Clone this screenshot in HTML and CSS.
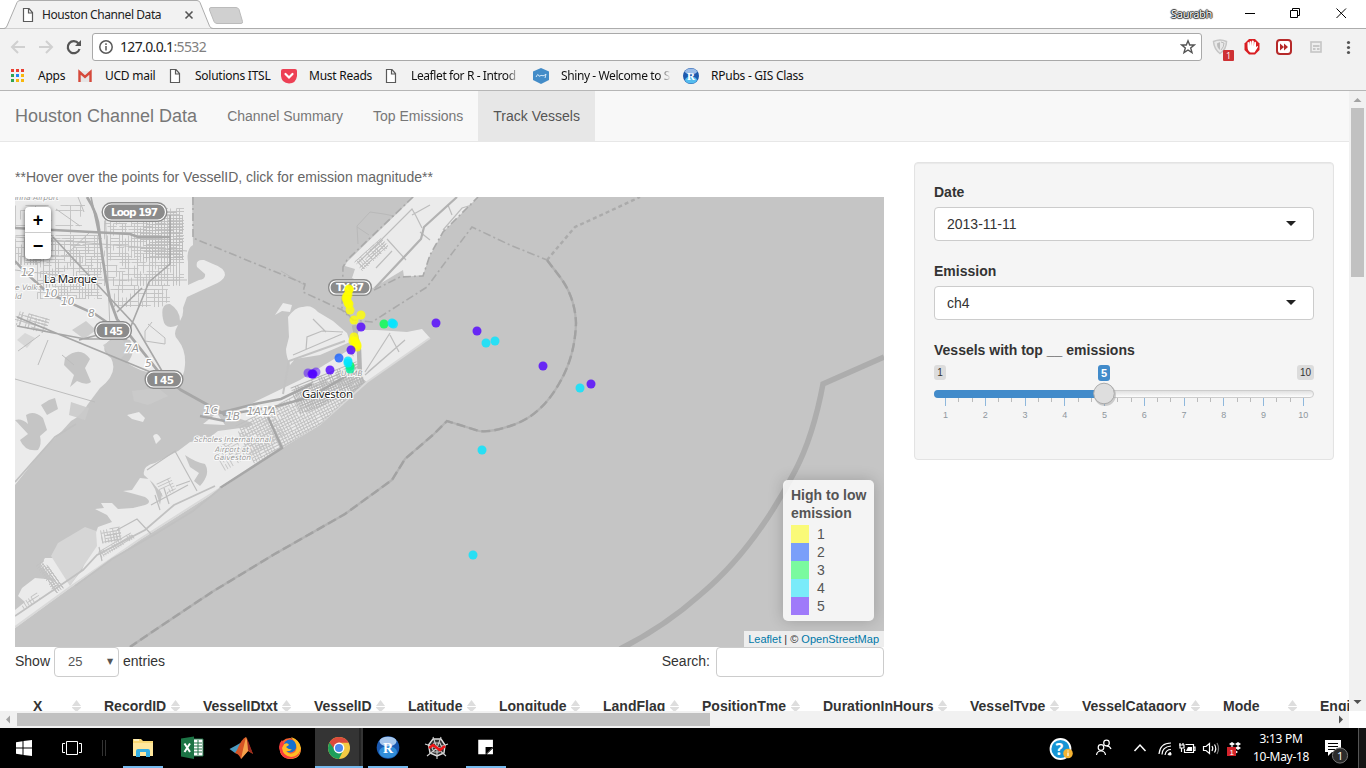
FILE: index.html
```html
<!DOCTYPE html>
<html lang="en">
<head>
<meta charset="utf-8">
<title>Houston Channel Data</title>
<link rel="stylesheet" href="styles.css">
</head>
<body>
<div class="window">
  <header class="tabstrip">
    <svg class="tab-shape" width="250" height="29" viewBox="0 0 250 29">
      <path d="M0 28.5H4Q6 28.5 7 26L17 2.500Q18 .5 20 .5H197Q199 .5 200 2.500L209.500 26Q210.500 28.500 213 28.500H250" fill="#f2f2f2" stroke="#acacac"/>
      <path d="M211 7.500H236Q238 7.500 239 9.500L242.500 21.500Q243 23.500 241 23.500H217Q215 23.500 214 21.500L209.500 10Q209 7.500 211 7.500Z" fill="#d0d0d0" stroke="#bbb"/>
      <path d="M23.500 8.500H29L32.500 12.500V21.500H23.500ZM28.500 8.500V13H32.500" fill="#fff" stroke="#5a5a5a" stroke-width="1.200"/>
      <path d="M185.500 11.500L192.500 18.500M192.500 11.500L185.500 18.500" stroke="#555" stroke-width="1.600"/>
    </svg>
    <span class="tab-title">Houston Channel Data</span>
    <span class="user">Saurabh</span>
    <svg class="winbtns" width="130" height="28" viewBox="1236 0 130 28" fill="none" stroke="#000">
      <path d="M1245 13.500H1255M1290.500 10.500H1297.500V17.500H1290.500ZM1292.500 10.500V8.500H1299.500V15.500H1297.500M1336.500 8.500L1346 18M1346 8.500L1336.500 18"/>
    </svg>
  </header>
  <div class="toolbar">
    <svg width="92" height="32" viewBox="0 29 92 32" fill="none">
      <path d="M25 47H12M18 41L12 47L18 53M39 47H52M46 41L52 47L46 53" stroke="#d0d0d0" stroke-width="2"/>
      <path d="M78.500 43.500A6 6 0 1 0 79.500 49" stroke="#555" stroke-width="2.200"/><path d="M81 40V46H75Z" fill="#555"/>
    </svg>
    <div class="omnibox">
      <svg width="16" height="16" viewBox="0 0 16 16" fill="none" stroke="#5a5a5a" stroke-width="1.500"><circle cx="8" cy="8" r="6.200"/><path d="M8 7V11.500M8 4.300V6"/></svg>
      <span class="url">127.0.0.1<i>:5532</i></span>
      <svg class="star" width="16" height="16" viewBox="0 0 16 16"><path d="M8 1.800L9.700 6H14.200L10.700 8.900L12 13.600L8 11L4 13.600L5.300 8.900L1.800 6H6.300Z" fill="none" stroke="#555" stroke-width="1.400"/></svg>
    </div>
    <svg width="164" height="32" viewBox="1202 29 164 32">
      <path d="M1213.500 41.500Q1220 38.500 1226.500 41.500Q1226.500 49 1220 53.500Q1214 49 1213.500 41.500Z" fill="#e8e8e8" stroke="#c5c5c5" stroke-width="1.500"/><path d="M1217 43.500Q1220 42 1220 42V50Q1217 48 1217 43.500Z" fill="#bbb"/><path d="M1221 42Q1224 43 1224 43Q1224 47 1221 50" fill="none" stroke="#bbb"/>
      <rect x="1223" y="50" width="11" height="11" rx="1" fill="#ce3134"/><text x="1226" y="59" font-size="9" fill="#fff" font-family="Open Sans,sans-serif">1</text>
      <path d="M1249 39H1255L1259.500 43.500V50L1255 54.500H1249L1244.500 50V43.500Z" fill="#d91e22"/><path d="M1247.500 46.500V42.500Q1248.500 41.500 1249.300 42.500V46L1249.700 41.500Q1250.500 40.500 1251.400 41.500V46L1252 40.800Q1253 40 1253.800 41V46.500L1254.400 42Q1255.500 41.500 1256 42.500V47L1257.500 46Q1258 46 1258 47L1254.500 52.500H1250.500Q1247.500 51 1247.500 46.500Z" fill="#fff"/>
      <rect x="1277" y="40" width="14" height="14" rx="3" fill="#fff" stroke="#b62a2a" stroke-width="2"/><path d="M1280 43.500L1284 47L1280 50.500ZM1284 43.500L1288 47L1284 50.500Z" fill="#b62a2a"/>
      <rect x="1311" y="42" width="10" height="10" fill="#eee" stroke="#c5c5c5" stroke-width="1.600"/><path d="M1313 46H1319.500M1313 49H1315.500M1317 49H1319.500" stroke="#bbb" stroke-width="1.600"/>
      <g fill="#555"><circle cx="1348.500" cy="42.500" r="1.600"/><circle cx="1348.500" cy="47.500" r="1.600"/><circle cx="1348.500" cy="52.500" r="1.600"/></g>
    </svg>
  </div>
  <nav class="bookmarks">
    <svg width="38" height="29" viewBox="0 61 38 29"><path d="M11 69h3v3h-3zM16 69h3v3h-3zM21 69h3v3h-3z" fill="#ea3f33"/><path d="M11 74h3v3h-3zM11 79h3v3h-3z" fill="#30a450"/><path d="M16 74h3v3h-3z" fill="#1f87f5"/><path d="M21 74h3v3h-3zM16 79h3v3h-3zM21 79h3v3h-3z" fill="#f8b70b"/></svg>
    <span class="bm" style="width:40px">Apps</span>
    <svg width="27" height="29" viewBox="78 61 27 29"><path d="M78.500 71H91.500V82H78.500Z" fill="#e6e6e6"/><path d="M79.500 82V72L85 77L90.500 72V82" fill="none" stroke="#d6493b" stroke-width="2.400"/></svg>
    <span class="bm" style="width:63px">UCD mail</span>
    <svg width="27" height="29" viewBox="168 61 27 29"><path class="doc" d="M170.500 69.500H176L179.500 73.500V82.500H170.500ZM175.500 69.500V74H179.500"/></svg>
    <span class="bm" style="width:86px">Solutions ITSL</span>
    <svg width="28" height="29" viewBox="281 61 28 29"><path d="M281 71Q281 69 283 69H295Q297 69 297 71V76Q296 83.500 289 83.500Q281.500 83 281 76Z" fill="#ed4055"/><path d="M285.500 74L289 77.500L292.500 74" fill="none" stroke="#fff" stroke-width="2.200" stroke-linecap="round"/></svg>
    <span class="bm" style="width:75px">Must Reads</span>
    <svg width="27" height="29" viewBox="384 61 27 29"><path class="doc" d="M386.500 69.500H392L395.500 73.500V82.500H386.500ZM391.500 69.500V74H395.500"/></svg>
    <span class="bm fade" style="width:109px">Leaflet for R - Introd</span>
    <svg width="41" height="29" viewBox="520 61 41 29"><path d="M541 68L549 71.500V80L541 84L533 80V71.500Z" fill="#438cc8"/><path d="M536 77Q538 73 538.500 75T540 76T542 75.500T544 75.500T546 74L545 78" fill="none" stroke="#d4e8f8"/></svg>
    <span class="bm fade" style="width:110px">Shiny - Welcome to S</span>
    <svg width="40" height="29" viewBox="671 61 40 29"><circle cx="691" cy="76" r="8" fill="#1d59ae"/><ellipse cx="691" cy="80" rx="6" ry="3.500" fill="#54bcee"/><ellipse cx="691" cy="71.500" rx="6" ry="3" fill="#9abce8"/><text x="687" y="80" class="serif" font-size="11">R</text></svg>
    <span class="bm">RPubs - GIS Class</span>
  </nav>
  <div class="viewport">
    <main class="page">
      <nav class="navbar">
        <span class="brand">Houston Channel Data</span>
        <a>Channel Summary</a><a>Top Emissions</a><a class="active">Track Vessels</a>
      </nav>
      <div class="columns">
        <section class="left">
          <p class="hint">**Hover over the points for VesselID, click for emission magnitude**</p>
          <div class="map">
            <svg width="869" height="450" viewBox="15 197 869 450">
              <defs>
                <clipPath id="mainland"><path d="M15 197H192L193 245L188 262L188 283L182 298L166 303L162 318L167 330L177 335L183 348L185 365L178 382L168 387L158 372L127 363L133 352L130 338L110 340L103 348L112 357L113 372L103 387L88 404L68 423L42 450L15 485Z"/></clipPath>
                <clipPath id="island"><path d="M222 415L290 377L350 346L365 382L320 425L282 448L222 488L180 473L205 435L222 428Z"/></clipPath>
              </defs>
              <rect x="15" y="197" width="869" height="450" fill="#c5c5c5"/>
              <g fill="#ebebeb">
                <path d="M15 197H192L193 245Q186 249 188 262L188 285L199 280Q206 279 205 274L197 267Q195 259 204 260L213 264Q225 268 225 275Q224 281 211 286L187 297L183 308Q184 315 180 321Q180 310 170 304Q160 303 163 319Q165 331 178 325Q172 335 178 340Q186 350 185 365Q184 378 178 381L168 387L158 372Q148 376 127 363Q137 352 130 340Q123 337 110 340Q98 349 111 358Q119 373 100 388L88 404Q81 416 71 421L62 431L42 451L15 485Z"/>
                <path d="M15 610L25 602L18 596L22 588L35 578L46 579L57 583L40 566L45 558L54 558L70 585L82 570L98 527L112 522L107 515L95 509L104 508L101 503L112 503L118 509L133 508L145 505Q153 502 145 497Q135 494 123 491L132 490L140 478L149 479L155 489L160 505L162 494L153 483L144 475Q142 466 155 463L178 451L190 442L206 440L218 431L248 427L253 423L228 415L300 380L347 351L360 362L360 383L320 425L282 448L222 488L140 540L70 588L15 628Z"/>
                <path d="M288 317Q296 306 303 307Q311 304 318 312L333 321L347 333L350 342L320 355L295 359L290 365Q286 356 286 349L289 337ZM275 315L283 303L292 305L290 312L282 311ZM352 338L361 330H377L407 332L422 329L430 338L367 382L355 374ZM414 197L347 262L345 266L355 269L352 278L373 288L383 282L403 270L404 277L423 275L430 255L437 243L443 232L478 197Z"/>
                <path d="M127 415L139 412L145 418L143 422L132 419ZM153 436Q157 431 161 439L156 444ZM203 424L217 413L225 425Z"/>
              </g>
              <path d="M51 556L58 543L85 527L96 531L97 546L70 586Z" fill="#d6d6d6"/>
              <path d="M222 487L282 447L320 424L367 382L430 338M15 627L70 587L140 539L222 487" fill="none" stroke="#d9d9d9" stroke-width="2"/>
              <g fill="#c5c5c5">
                <path d="M65 358Q80 345 90 359L85 368L91 382Q87 386 77 381L70 387L74 375L64 365Z"/>
                <path d="M15 420Q22 418 28 424L26 415Q34 410 43 418L47 430L40 436Q42 444 38 450Q25 452 20 440L28 434ZM49 400L55 398L58 409L47 415L41 405Z"/>
                <path d="M185 455Q195 462 205 464Q211 474 200 486L194 481L199 473L190 467Z"/>
                <path d="M17 340L25 333L35 338L27 348Z" opacity=".5"/>
              </g>
              <g fill="#cbcbcb" opacity=".9"><path d="M103 345L119 336L130 349L120 359L109 355ZM132 391L158 388L168 396L148 405L134 401Z"/><path d="M71 402L89 408L85 420L69 415ZM72 330L86 321L96 330L84 339Z"/></g>
              <g id="streets" fill="none" stroke="#c3c3c3" stroke-width=".9"></g>
              <g fill="none" stroke="#bdbdbd">
                <path d="M15 237L187 251M15 270L97 280H187M78 197L84 212M56 209L80 226M66 255L91 231M105 206L110 330M148 324L165 338V344L145 341V331L152 322M15 379L95 402M40 335L18 351M48 340L38 365M62 355L74 365"/>
                <path d="M293 355L342 334M306 350L307 337L322 331L343 332M326 332L313 319M365 372L390 333M368 372L405 340L365 375M390 335L399 352M358 263L412 209L416 216L422 228M412 215L430 205M430 240L420 232M376 268L392 251M406 260L387 239M443 230L462 208L472 205M452 215L448 205" stroke-width="1.200"/>
                <path d="M147 470L175 451L197 491M190 481L176 486M151 505L188 485M155 495L160 510M164 488L169 504M117 530L137 519L151 534M99 547L102 561" stroke-width="1.200"/>
              </g>
              <g fill="none" stroke="#a7a7a7">
                <path d="M15 228L130 234L138 237H170" stroke-width="2.600"/><path d="M87 197Q98 214 99 230Q103 267 110 300L117 319L158 371L181 390L226 415" stroke-width="2.800"/><path d="M91 197L99 235M53 237L135 325L162 371M170 215V264L149 282L131 326L79 340M117 312L142 288M17 317L165 378M17 326L85 339H127" stroke-width="1.600"/>
                <path d="M15 261L27 274L48 293L95 314L111 325M219 413L255 404L281 399L312 384M223 415L274 407L310 397L350 374M225 421L200 416M268 417L282 448L220 488" stroke-width="2.500"/>
                <path d="M354 325L359 350L360 376" stroke-width="4.500" stroke="#b4b4b4"/><path d="M375 288L421 239L424 227L457 197" stroke-width="2.200" stroke="#b2b2b2"/>
                <path d="M15 616L83 570L97 555L145 530L174 505L215 486M15 482L55 437L76 424M75 586L112 559L157 533L193 511L221 488" stroke-width="1.800" stroke="#c1c1c1"/>
                <path d="M283 394L289 361L345 341" stroke-width="2" stroke="#c3c3c3"/>
              </g>
              <g fill="none" stroke="#b9b9b9"><path d="M358 244L357 226L370 212L384 214L394 216M357 227L369 235M281 271L306 286"/></g>
              <g fill="none" stroke="#aaa" stroke-width="1.600" stroke-dasharray="8 3 2 3">
                <path d="M193 197V238L305 284L303 292L342 310L353 320L372 322L427 287L447 260L472 227L510 245L547 260M413 197L347 260L343 267L342 308L356 323M374 290L400 277L423 276L430 255L443 232L478 197"/>
              </g>
              <path d="M547 260L575 227L597 217L640 197" fill="none" stroke="#ababab" stroke-width="2.400" stroke-dasharray="4 3"/>
              <path d="M547 260L560 277Q575 297 576 323Q575 356 560 382Q542 415 513 425Q490 433 479 431L447 421L434 434L405 459L392 480L345 514L273 555L212 592L155 630L130 647" fill="none" stroke="#b3b3b3" stroke-width="2.200"/>
              <path d="M547 260L560 277Q575 297 576 323Q575 356 560 382Q542 415 513 425Q490 433 479 431L447 421L434 434L405 459L392 480L345 514L273 555L212 592L155 630L130 647" fill="none" stroke="#a2a2a2" stroke-width="2.400" stroke-dasharray="9 4"/>
              <path d="M884 357L823 384Q813 437 795 471C767 525 735 566 700 595Q664 627 620 649" fill="none" stroke="#adadad" stroke-width="5.500"/>
              <g fill="#8b8b8b" stroke="#8b8b8b" stroke-width="2"><rect x="102.500" y="203" width="64" height="18" rx="9"/><rect x="95" y="322" width="36" height="17" rx="8"/><rect x="145.500" y="371" width="37" height="17" rx="8"/><rect x="329" y="280" width="42" height="15" rx="7"/></g>
              <g fill="#8b8b8b" stroke="#fff" stroke-width="1.200"><rect x="103.500" y="204" width="62" height="16" rx="8"/><rect x="96" y="323" width="34" height="15" rx="7"/><rect x="146.500" y="372" width="35" height="15" rx="7"/><rect x="330" y="281" width="40" height="13" rx="6"/></g>
              <g class="shield"><text x="111" y="216" textLength="47">Loop 197</text><text x="104" y="335" textLength="19">I 45</text><text x="154" y="384" textLength="20">I 45</text><text x="336" y="291" textLength="28">TX 87</text></g>
              <g class="exit"><text x="21" y="276">12</text><text x="44" y="297">10</text><text x="61" y="305">10</text><text x="88" y="317">8</text><text x="125" y="352">7A</text><text x="145" y="367">5</text><text x="204" y="414">1C</text><text x="226" y="420">1B</text><text x="247" y="415">1A</text><text x="262" y="415">1A</text></g>
              <g class="airport"><text x="12" y="200">onna Airport</text><text x="15" y="290">e Volk</text><text x="15" y="299">ld</text><text x="194" y="442" textLength="77">Scholes International</text><text x="215" y="451.500" textLength="34">Airport at</text><text x="214" y="460" textLength="37">Galveston</text><text x="341" y="376">UTMB</text></g>
              <g class="town"><text x="44" y="282.500" textLength="53">La Marque</text><text x="302" y="398" textLength="51">Galveston</text></g>
              <g id="vessels" fill-opacity=".8"></g>
            </svg>
            <div class="zoomctl"><b>+</b><b>−</b></div>
            <div class="legend"><strong>High to low<br>emission</strong>
              <div><i class="y"></i>1</div><div><i class="b"></i>2</div><div><i class="g"></i>3</div><div><i class="c"></i>4</div><div><i class="p"></i>5</div>
            </div>
            <div class="attrib"><a>Leaflet</a> | © <a>OpenStreetMap</a></div>
          </div>
          <div class="controls">
            <span>Show</span><span class="count">25<em>▼</em></span><span>entries</span>
            <span class="search">Search:</span><span class="searchbox"></span>
          </div>
          <div class="thead" id="thead"></div>
        </section>
        <aside class="well">
          <label>Date</label><div class="select">2013-11-11</div>
          <label>Emission</label><div class="select">ch4</div>
          <label class="last">Vessels with top __ emissions</label>
          <svg class="slider" width="380" height="60" viewBox="934 364 380 60">
            <defs><linearGradient id="track" x2="0" y2="1"><stop stop-color="#dedede"/><stop offset="1" stop-color="#fff"/></linearGradient></defs>
            <rect x="934" y="365" width="12" height="15" rx="3" fill="#dcdcdc"/><rect x="1297" y="365" width="17" height="15" rx="3" fill="#dcdcdc"/><rect x="1098" y="365" width="12" height="16" rx="3" fill="#428bca"/>
            <g font-size="10" fill="#333" text-anchor="middle"><text x="940" y="376">1</text><text x="1305.500" y="376">10</text><text x="1104" y="377" font-size="11" font-weight="bold" fill="#fff">5</text></g>
            <rect x="934.500" y="390.500" width="379" height="7" rx="3.500" fill="url(#track)" stroke="#ccc"/>
            <path d="M1104 390H938Q934 390 934 394Q934 398 938 398H1104Z" fill="#428bca"/>
            <g id="ticks" font-size="9" fill="#8f979e" text-anchor="middle"></g>
            <circle cx="1105" cy="395" r="11" fill="#999" opacity=".45"/><circle cx="1104" cy="393.500" r="10.300" fill="#dedede" stroke="#aaa"/>
          </svg>
        </aside>
      </div>
    </main>
    <div class="vbar"><svg width="17" height="620" viewBox="0 0 17 620"><path d="M4.500 11L8.500 7L12.500 11Z" fill="#a3a3a3"/><rect x="2" y="17" width="13" height="169" fill="#c1c1c1"/><path d="M4.500 609H12.500L8.500 613Z" fill="#505050"/></svg></div>
  </div>
  <div class="hbar"><svg width="1349" height="17" viewBox="0 0 1349 17"><path d="M10 4.500V12.500L6 8.500Z" fill="#a3a3a3"/><rect x="17" y="2" width="693" height="13" fill="#c1c1c1"/><path d="M1339 4.500L1343 8.500L1339 12.500Z" fill="#505050"/></svg></div>
  <footer class="taskbar">
    <svg width="48" height="40" viewBox="0 728 48 40" fill="#fff"><path d="M16 742.200L22.500 741.300V747.500H16ZM23.500 741.100L32 740V747.500H23.500ZM16 748.500H22.500V754.700L16 753.800ZM23.500 748.500H32V756L23.500 754.900Z"/></svg>
    <svg width="71" height="40" viewBox="48 728 71 40" fill="none" stroke="#fff"><path d="M66.500 741.500H77.500V754.500H66.500ZM65 743.500H62.500V752.500H65M79 743.500H81.500V752.500H79"/><path d="M102.500 740V756M105.500 740V756" stroke="#333"/></svg>
    <svg width="49" height="40" viewBox="119 728 49 40"><path d="M133 739H141L143 741H153V756H133Z" fill="#f9d875"/><path d="M134 740H139" stroke="#fff6d0" stroke-width="1.500"/><path d="M133 743H153V756H133Z" fill="#ffe79c"/><path d="M136 757V751Q136 749 138 749H148Q150 749 150 751V757H146V752H140V757Z" fill="#35aee2"/><rect x="123" y="766" width="40" height="2" fill="#76b9ed"/></svg>
    <svg width="49" height="40" viewBox="168 728 49 40"><path d="M191 739H203V756H191Z" fill="#fff" stroke="#217346"/><path d="M194 743H202M194 746H202M194 749H202M194 752H202M198 740V755" stroke="#217346"/><path d="M181 738.500L194 736.500V759L181 756.500Z" fill="#1c7445"/><path d="M184.500 743.500L190 752M190 743.500L184.500 752" stroke="#fff" stroke-width="2"/></svg>
    <svg width="49" height="40" viewBox="217 728 49 40"><path d="M229.500 749L236 745.500L242 742L239 754L235 753Z" fill="#4b9bc1"/><path d="M237 750Q242 738 246 737Q249 745 253 754L248 751L241 759Q239 754 235 753Z" fill="#d65424"/><path d="M246 737Q249 745 248 751L241 759Q243 749 246 737Z" fill="#f6a34b"/><path d="M247 738L253 754L248 750Z" fill="#9b291f"/></svg>
    <svg width="49" height="40" viewBox="266 728 49 40"><circle cx="290" cy="748.500" r="10.500" fill="#fb622e"/><circle cx="290" cy="746" r="6.500" fill="#1670d0"/><path d="M291 737Q300 740 301 748Q301 759 290 759Q281 758 280 750L284 744Q288 742 289 745L286 747Q289 750 292 749Q290 752 286 751Q290 756 295 752Q298 748 295 742Z" fill="#ffbd24"/><path d="M279 747Q281 762 294 758Q300 756 301 749Q298 757 291 757Q283 756 282 748L284 744L282 740Q279 743 279 747Z" fill="#fa3c3c"/></svg>
    <svg class="running" width="49" height="40" viewBox="315 728 49 40"><rect x="315" y="728" width="48" height="40" fill="#343434"/><path d="M360 728V768" stroke="#151515"/><circle cx="339" cy="748" r="11" fill="#f4ca43"/><path d="M329.500 742.500A11 11 0 0 1 348.700 742.700H339V748L334 751Z" fill="#db4a3c"/><path d="M329.500 742.500A11 11 0 0 0 339 759L343.500 750H335Z" fill="#1d9e5b"/><circle cx="339" cy="748" r="5.400" fill="#fff"/><circle cx="339" cy="748" r="4" fill="#4b89ef"/><rect x="315" y="766" width="48" height="2" fill="#76b9ed"/></svg>
    <svg width="49" height="40" viewBox="364 728 49 40"><circle cx="388" cy="747.500" r="11.300" fill="#1958b0"/><ellipse cx="388" cy="752" rx="9" ry="6" fill="#318ed9"/><ellipse cx="388" cy="741.500" rx="8.500" ry="4.800" fill="#a6c7ed"/><text x="383" y="752.500" class="serif" font-size="14">R</text><rect x="368" y="766" width="40" height="2" fill="#76b9ed"/></svg>
    <svg width="49" height="40" viewBox="413 728 49 40" fill="none"><path d="M433 739H441L445 745L444 753L437 756L430 753L428.500 745Z" fill="#303030" stroke="#ddd" stroke-width="1.400"/><path d="M437 748L433 737M437 748L441 737M437 748L448 744M437 748L446 756M437 748V759M437 748L427 756M437 748L425 744M434 743H440L442 748L439 752H434L432 748Z" stroke="#ccc" stroke-width="1.100"/><path d="M429 748L433 745L440 750L445 746" stroke="#ed1517" stroke-width="2.600"/></svg>
    <svg width="49" height="40" viewBox="462 728 49 40"><path d="M477 739H495V748L486 757H477Z" fill="#fff"/><path d="M486 748H495L486 757Z" fill="#000"/><path d="M487.500 757H495V749.500Z" fill="#fff"/></svg>
    <svg class="tray" width="202" height="40" viewBox="1043 728 202 40" fill="none" stroke="#fff" stroke-width="1.200">
      <circle cx="1059.500" cy="749" r="10" fill="#1695d5" stroke-width="1.800"/><text x="1054.500" y="755" class="q">?</text><circle cx="1067" cy="753.500" r="4.800" fill="#f6b331" stroke="none"/><path d="M1067 752.500V756M1067 750.500V751.500"/>
      <circle cx="1100" cy="747.500" r="2.800"/><path d="M1095.500 755Q1096 751 1100 751Q1104 751 1104.500 755"/><circle cx="1105.500" cy="743" r="2.800"/><path d="M1105.500 746Q1109 746 1110 749"/>
      <path d="M1133.500 751L1139 745L1144.500 751" stroke-width="1.500"/>
      <path d="M1158 754Q1159 743 1170 743M1161 754.500Q1161 747 1170 746M1164 755Q1165 749.500 1170 749.500M1167 755Q1168 752.500 1170 752.500"/><circle cx="1169" cy="754" r="1" fill="#fff"/>
      <path d="M1184.500 744.500H1192.500V752.500H1183.500V749M1192.500 747H1194V750.500H1192.500M1178 745H1183V748H1179V745M1179 743V745M1182 743V745M1180.500 748V752"/><path d="M1187 747H1191V751H1185Z" fill="#fff" stroke="none"/>
      <path d="M1202.500 746.500H1205L1208.500 743.500V753.500L1205 750.500H1202.500ZM1211 746Q1212.500 748 1211 751M1213.500 744.500Q1216 748.500 1213.500 752.500"/><path d="M1216 743Q1219 748.500 1216 754" stroke="#777"/>
      <path d="M1228 744L1231 742L1234 744L1231 746ZM1234 744L1237 742L1240 744L1237 746ZM1228 748L1231 746L1234 748L1231 750ZM1234 748L1237 746L1240 748L1237 750ZM1231.500 752L1234 750L1237 752L1234 754Z" fill="#fff" stroke="none"/><rect x="1226" y="747" width="9" height="9" fill="#d4232a" stroke="none"/><text x="1228.500" y="754.500" font-size="8" fill="#fff" stroke="none">1</text>
    </svg>
    <div class="clock"><span>3:13 PM</span><span>10-May-18</span></div>
    <svg width="50" height="40" viewBox="1316 728 50 40"><path d="M1325 740H1341V752H1332L1328 756V752H1325Z" fill="#fff"/><path d="M1328 743.500H1338M1328 746.500H1338M1328 749.500H1335" stroke="#000"/><circle cx="1340" cy="755.500" r="7.600" fill="#2b2b2b" stroke="#777"/><text x="1337" y="759.500" font-size="11" fill="#fff" font-family="Open Sans,sans-serif">1</text><path d="M1358.500 728V768" stroke="#555"/><rect x="1359" y="728" width="7" height="40" fill="#151515"/></svg>
  </footer>
</div>
<script src="app.js"></script>
</body>
</html>
```
FILE: styles.css
```css
* { box-sizing: border-box; }
body { margin: 0; overflow: hidden; font: 14px/20px "Liberation Sans", Arial, sans-serif; color: #333; background: #fff; }
svg { display: block; flex: none; }
.window { width: 1366px; height: 768px; display: flex; flex-direction: column; }
.tabstrip, .toolbar, .bookmarks, .tab-title, .user, .clock { font-family: "Noto Sans", sans-serif; }
.tabstrip { height: 29px; flex: none; display: flex; position: relative; border-bottom: 1px solid #acacac; font-size: 12px; }
.tab-shape { margin-bottom: -1px; z-index: 1; }
.tab-title { position: absolute; left: 42px; top: 5px; z-index: 2; color: #222; letter-spacing: -.42px; white-space: nowrap; }
.user { margin-left: auto; margin-right: 24px; padding-top: 4px; font-size: 11px; letter-spacing: -.3px; color: #fff; text-shadow: 0 0 1px #000, 1px 0 1px #333, -1px 0 1px #333, 0 1px 1px #333, 0 -1px 1px #333; }
.toolbar { height: 32px; flex: none; display: flex; background: #f2f2f2; }
.omnibox { width: 1110px; height: 28px; margin-top: 4px; border: 1px solid #a9a9a9; border-radius: 3px; background: #fff; display: flex; align-items: center; padding: 0 5px; }
.url { margin-left: 6px; font-size: 14px; letter-spacing: -.65px; color: #222; }
.url i { font-style: normal; color: #808080; }
.star { margin-left: auto; }
.bookmarks { height: 30px; flex: none; display: flex; background: #f2f2f2; border-bottom: 1px solid #b6b6b6; font-size: 12px; color: #111; }
.bm { line-height: 30px; height: 29px; white-space: nowrap; letter-spacing: -.25px; }
.fade { -webkit-mask-image: linear-gradient(90deg, #000 88%, transparent); mask-image: linear-gradient(90deg, #000 88%, transparent); letter-spacing: -.4px; }
.doc { fill: #fff; stroke: #5a5a5a; stroke-width: 1.2; }
.serif { font-family: "Liberation Serif", serif; font-weight: bold; fill: #fff; }
.viewport { height: 620px; flex: none; display: flex; }
.page { width: 1349px; overflow: hidden; }
.navbar { height: 51px; display: flex; background: #f8f8f8; border-bottom: 1px solid #e7e7e7; color: #777; }
.navbar span, .navbar a { padding: 15px; }
.navbar .brand { font-size: 18px; }
.navbar .active { background: #e7e7e7; color: #555; }
.columns { display: flex; align-items: flex-start; padding: 20px 15px 0; gap: 30px; }
.left { width: 869px; flex: none; }
.hint { margin: 5px 0 10px; color: #666; }
.map { position: relative; height: 450px; overflow: hidden; }
.shield { font: bold 10.5px "DejaVu Sans", sans-serif; fill: #fff; }
.exit { font: italic 10.5px "DejaVu Sans", sans-serif; fill: #999; stroke: #fff; stroke-width: 2.5px; paint-order: stroke; }
.airport { font: italic 7.5px "DejaVu Sans", sans-serif; fill: #999; stroke: #f8f8f8; stroke-width: 2px; paint-order: stroke; }
.town { font: 11.5px "Noto Sans", sans-serif; fill: #222; stroke: #fff; stroke-width: 2px; paint-order: stroke; }
.zoomctl { position: absolute; left: 10px; top: 10px; width: 26px; border-radius: 4px; background: #fff; box-shadow: 0 1px 5px rgba(0,0,0,.65); color: #000; }
.zoomctl b { display: block; height: 26px; text-align: center; font-size: 18px; line-height: 26px; }
.zoomctl b:first-child { border-bottom: 1px solid #ccc; }
.legend { position: absolute; right: 10px; bottom: 26px; width: 91px; height: 141px; padding: 6px 8px; line-height: 18px; color: #555; background: rgba(255,255,255,.8); border-radius: 5px; box-shadow: 0 0 15px rgba(0,0,0,.2); white-space: nowrap; }
.legend strong { display: block; margin-bottom: 3px; }
.legend div { display: flex; gap: 8px; }
.legend i { width: 18px; height: 18px; }
.y { background: #fafa78; }
.b { background: #7a9ffa; }
.g { background: #7afa9f; }
.c { background: #7aebfa; }
.p { background: #9f7afa; }
.attrib { position: absolute; right: 0; bottom: 0; height: 16px; padding: 0 5px 0 4px; font-size: 11px; line-height: 17px; background: rgba(255,255,255,.7); white-space: nowrap; }
.attrib a { color: #0078a8; }
.controls { display: flex; height: 30px; line-height: 28px; }
.count { width: 65px; height: 30px; margin: 0 4px; padding: 0 13px; border: 1px solid #ccc; border-radius: 4px; font-size: 13px; color: #555; display: flex; justify-content: space-between; }
.count em { font: 8px/27px "DejaVu Sans", sans-serif; margin-right: -8px; }
.search { margin-left: auto; margin-right: 6px; }
.searchbox { width: 168px; height: 30px; border: 1px solid #ccc; border-radius: 4px; }
.thead { display: flex; padding-top: 19px; width: 1350px; font-weight: bold; }
.thead span { flex: none; display: flex; justify-content: space-between; padding: 0 5px 0 18px; }
.thead span::after { content: ""; width: 9px; height: 12px; margin-top: 4px; background: linear-gradient(#fff,#fff) 0 6px/9px 1px no-repeat, #ddd; clip-path: polygon(50% 0,100% 50%,100% 65%,50% 100%,0 65%,0 50%); }
.well { width: 420px; height: 298px; flex: none; padding: 19px; border: 1px solid #e3e3e3; border-radius: 4px; background: #f5f5f5; box-shadow: inset 0 1px 1px rgba(0,0,0,.05); }
.well label { display: block; font-weight: bold; margin-bottom: 5px; }
.well .last { margin-bottom: 4px; }
.select { height: 34px; margin-bottom: 20px; padding: 6px 17px 6px 12px; border: 1px solid #ccc; border-radius: 4px; background: #fff; display: flex; justify-content: space-between; align-items: center; }
.select::after { content: ""; border: 5px solid transparent; border-top-color: #222; margin-top: 4px; }
.vbar { width: 17px; background: #f1f1f1; }
.hbar { width: 1349px; height: 17px; flex: none; background: #f1f1f1; }
.taskbar { height: 40px; flex: none; display: flex; background: #000; color: #fff; }
.taskbar svg:nth-child(10) { border-bottom: 2px solid #76b9ed; width: 40px; height: 40px; margin: 0 4px; }
.tray { margin-left: auto; }
.q { font: bold 16px "Noto Sans", sans-serif; fill: #fff; stroke: none; }
.clock { width: 70px; display: flex; flex-direction: column; align-items: center; font-size: 12px; line-height: 18px; letter-spacing: -.3px; padding-top: 2px; white-space: nowrap; }
```
FILE: app.js
```js
const NS = 'http://www.w3.org/2000/svg';
function add(parent, tag, attrs, text) {
  const el = document.createElementNS(NS, tag);
  for (const k in attrs) el.setAttribute(k, attrs[k]);
  if (text) el.textContent = text;
  parent.appendChild(el);
}

/* Table header: label and column width */
const cols = [['X',71],['RecordID',99],['VesselIDtxt',111],['VesselID',94],['Latitude',91],['Longitude',104],['LandFlag',99],['PositionTme',121],['DurationInHours',147],['VesselType',112],['VesselCatagory',141],['Mode',97],['EngineType',120]];
for (const [name, w] of cols) {
  const s = document.createElement('span');
  s.textContent = name;
  s.style.width = w + 'px';
  document.getElementById('thead').appendChild(s);
}

/* Slider scale */
const ticks = document.getElementById('ticks');
for (let i = 0; i <= 27; i++) {
  const x = 945.5 + i * 13.25, major = i % 3 === 0;
  add(ticks, 'path', {d: `M${Math.floor(x) + .5} 398V${major ? 406 : 402}`, stroke: major ? '#8fb8dc' : '#bbb'});
  if (major) add(ticks, 'text', {x, y: 418}, String(i / 3 + 1));
}

/* Vessel positions by emission rank */
const vessels = {
  '#ffff00': [[349,289],[349,290],[348,295],[347,296],[346,298],[347,300],[348,303],[349,304],[350,310],[361,315],[354,320],[354,337],[353,341],[355,341],[356,343],[357,345],[357,347]],
  '#00ff50': [[384,324],[350,366]],
  '#1560ff': [[339,358]],
  '#00f09f': [[350,369]],
  '#00e5ff': [[392,323],[393.5,324],[486,343],[495,341],[580,388],[348,361],[348,363],[482,450],[473,555]],
  '#5000ff': [[361,327],[436,323],[477,331],[543,366],[591,384],[351,350],[330,370],[313,374],[312,374]]
};
const layer = document.getElementById('vessels');
for (const c in vessels) for (const [cx, cy] of vessels[c]) add(layer, 'circle', {cx, cy, r: 4.5, fill: c});
for (const [cx, cy] of [[308,373],[316,372]]) add(layer, 'circle', {cx, cy, r: 4.5, fill: '#5000ff', 'fill-opacity': .5});

/* Local street grids */
let seed = 7;
const rnd = () => (seed = (seed * 16807) % 2147483647) / 2147483647;
const streets = document.getElementById('streets');
function grid(x, y, w, h, step, angle, n, clip, color) {
  let d = '';
  for (let i = 0; i < n; i++) {
    const a = x + Math.floor(rnd() * w / step) * step + .5, b = y + Math.floor(rnd() * h / step) * step + .5, len = 6 + rnd() * 17;
    d += rnd() < .5 ? `M${a} ${b}H${Math.min(a + len, x + w)}` : `M${a} ${b}V${Math.min(b + len, y + h)}`;
  }
  const g = document.createElementNS(NS, 'g');
  if (clip) g.setAttribute('clip-path', `url(#${clip})`);
  streets.appendChild(g);
  add(g, 'path', {d, transform: `rotate(${angle} ${x} ${y})`, stroke: color || '#c3c3c3'});
}
grid(104, 208, 80, 78, 3, 0, 330, 'mainland');
grid(140, 212, 43, 48, 3, 0, 190, 'mainland', '#bcbcbc');
grid(37, 235, 65, 64, 3, 0, 240, 'mainland');
grid(15, 205, 70, 60, 5, 0, 55, 'mainland');
grid(15, 235, 25, 30, 3, 0, 60, 'mainland');
grid(110, 285, 60, 22, 4, 0, 60, 'mainland');
grid(17, 310, 34, 15, 3, 16, 45, 'mainland');
grid(235, 426, 140, 42, 3, -27, 800, 'island', '#c0c0c0');
grid(213, 450, 70, 24, 3, -30, 110, 'island', '#c6c6c6');
grid(290, 388, 75, 28, 2.5, -22, 320, 'island', '#b5b5b5');
grid(354, 262, 36, 12, 2.5, -42, 80);
grid(44, 560, 34, 10, 2.5, 55, 90);
grid(98, 552, 38, 7, 2.5, -31, 70);
grid(20, 603, 20, 7, 3, -32, 18);
grid(100, 530, 20, 14, 3, -10, 30);
grid(156, 484, 16, 14, 3, -25, 25);
```
